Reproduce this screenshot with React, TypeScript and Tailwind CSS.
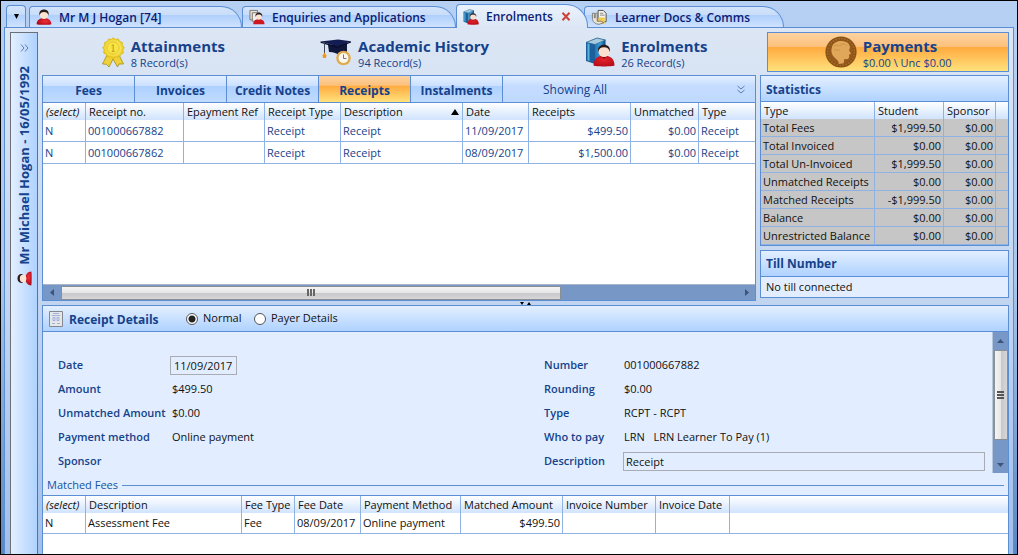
import React from "react";
import clsx from "clsx";

const PANEL = "border border-[#5c8ed6]";
const HEAD_BG = "bg-linear-to-b from-[#e3efff] to-[#afd2ff]";
const GLASS = "bg-linear-to-b from-[#e3efff] from-0% via-[#c4dcff] via-40% to-[#bfdaff] to-100%";
const ORANGE = "bg-[linear-gradient(#fdd3a0,#fcc07c_36%,#ffab3f_38%,#ffe17c)]";
const THEAD = "bg-linear-to-b from-white to-[#d0e3fd]";

function Person({ size = 16 }: { size?: number }) {
  return (
    <svg width={size} height={size} viewBox="0 0 16 16" aria-hidden="true">
      <defs>
        <radialGradient id="redBody" cx="0.6" cy="0.5" r="0.6">
          <stop offset="0" stopColor="#f0303a" />
          <stop offset="1" stopColor="#b00a18" />
        </radialGradient>
      </defs>
      <path d="M.6 15.200C.6 11.500 3.500 9 8 9s7.400 2.500 7.400 6.200c-1 .7-13.800.7-14.800 0z" fill="url(#redBody)" />
      <circle cx="8" cy="5.800" r="4.200" fill="#fbe3d3" />
      <path d="M3.500 6.500C2.600 2.500 5 .5 8 .5s5.400 2 4.500 6C11.500 3.800 10.500 3 8 3S4.500 3.800 3.500 6.500z" fill="#2a1c1c" />
    </svg>
  );
}

function PersonDoc() {
  return (
    <svg width="16" height="16" viewBox="0 0 17 16" aria-hidden="true">
      <path d="M1 1h8v10H1z" fill="#e8e4dc" stroke="#77736c" />
      <path d="M3.500 3.500h8v9h-8z" fill="#f2efe8" stroke="#77736c" />
      <path d="M4.500 15.600c0-3.600 2.300-5.200 6-5.200s6 1.600 6 5.200z" fill="#cf1722" />
      <circle cx="10.500" cy="7.600" r="3.200" fill="#fbe3d3" />
      <path d="M7 8C6.300 5 8.300 3.600 10.500 3.600S14.700 5 14 8C13.300 6 12.500 5.400 10.500 5.400S7.600 6 7 8z" fill="#2a1c1c" />
    </svg>
  );
}

function BookPerson({ size }: { size: number }) {
  return (
    <svg width={size} height={size} viewBox="0 0 30 30" aria-hidden="true">
      <defs>
        <linearGradient id="book" x1="0" x2="1">
          <stop offset="0" stopColor="#2277b4" />
          <stop offset="0.5" stopColor="#3b9bd0" />
          <stop offset="1" stopColor="#0e4a86" />
        </linearGradient>
        <radialGradient id="redCoat" cx="0.5" cy="0.4" r="0.6">
          <stop offset="0" stopColor="#e5222c" />
          <stop offset="1" stopColor="#b80e1a" />
        </radialGradient>
      </defs>
      <path d="M1 5.500L12 1l8.500 2L10 7.500z" fill="#a9cbdc" stroke="#1f5f92" strokeWidth=".8" />
      <path d="M1 5.500l9 2V27l-9-3z" fill="#1b5f9c" />
      <path d="M2.500 6.500l2 .5v17l-2-.7z" fill="#58b4dd" />
      <path d="M10 7.500L20.500 3v20L10 27z" fill="url(#book)" />
      <path d="M8.500 28.500c0-6.500 4-10 10.500-10s10.500 3.500 10.500 10c-2 1.200-19 1.200-21 0z" fill="url(#redCoat)" />
      <path d="M15.500 19l3.500 3 3.500-3z" fill="#8f0c16" />
      <circle cx="19" cy="14.500" r="5.500" fill="#fbe0cf" />
      <path d="M13.200 15c-.8-5 2-7.200 5.800-7.200s6.600 2.200 5.800 7.200c-.9-3.400-2.600-4.700-5.800-4.700s-4.900 1.300-5.800 4.700z" fill="#2a1a1a" />
    </svg>
  );
}

function Rosette() {
  return (
    <svg width="24" height="30" viewBox="0 0 24 30" aria-hidden="true">
      <defs>
        <radialGradient id="gold">
          <stop offset="0.5" stopColor="#fdf272" />
          <stop offset="1" stopColor="#e9c50f" />
        </radialGradient>
      </defs>
      <path d="M6 18L1.500 27l4 .3L8 30l4-8 4.500 8 1.500-3 4.500 0L18 18z" fill="#efd238" stroke="#a58a16" strokeWidth=".8" />
      <path
        d="M12 .8l2.400 1.600 2.900-.5 1.300 2.500 2.700 1 0 2.900 1.900 2.200-1.300 2.600.5 2.900-2.600 1.300-1.300 2.600-2.900-.2L12 21.300l-2.600-1.600-2.900.2-1.300-2.600-2.600-1.300.5-2.900L1.800 10.500l1.900-2.200 0-2.900 2.700-1 1.300-2.500 2.900.5z"
        fill="url(#gold)" stroke="#dcb81c" strokeWidth=".8"
      />
      <circle cx="12" cy="11" r="6.200" fill="#f8e545" stroke="#e3c32a" />
      <path d="M10.600 8.800L12.200 7.700v6.600M10.700 14.300h3" fill="none" stroke="#c29c14" />
    </svg>
  );
}

function GradCap() {
  return (
    <svg width="32" height="30" viewBox="0 0 32 30" aria-hidden="true">
      <path d="M8 8l1 7c5 0 9 2 12 4l6-3V6z" fill="#10173c" />
      <path d="M.5 4.500L18 2.500l13 1.700L17.500 9.500z" fill="#141d52" />
      <path d="M.5 4.500L17.500 9.500 31 4.200v1.400l-13.500 5.300L.5 5.800z" fill="#0a0e2b" />
      <path d="M4.500 5.500V18" stroke="#3f4356" strokeWidth="1" />
      <path d="M4.500 15.500l2 3-.5 2.500H3l-.5-2.500z" fill="#ee9a1c" />
      <circle cx="23.500" cy="21" r="7.300" fill="#e3ac4b" />
      <circle cx="23.500" cy="21" r="5.400" fill="#fbf7ee" stroke="#c9973c" strokeWidth=".6" />
      <path d="M23.500 17.500v4h3" fill="none" stroke="#777" />
    </svg>
  );
}

function Coin() {
  return (
    <svg width="32" height="32" viewBox="0 0 32 32" aria-hidden="true">
      <circle cx="16" cy="16" r="15.600" fill="#8b5316" />
      <circle cx="16" cy="16" r="13.400" fill="none" stroke="#a8702c" strokeWidth="1.500" strokeDasharray="1.500 1.500" />
      <circle cx="16" cy="16" r="12" fill="#96591b" />
      <path d="M7 11c1-4 5-6.500 10-6 5 .3 8 3 8 7l-1 2 2 4-2 .6.200 2.400-1 2-4 .2-.5 4-5 .8c.4-3-1.700-4-3.700-6C6.500 19 5.800 15 7 11z" fill="#e0a659" />
      <path d="M9 10c3-2 5 1 7-1s4-1 6 1M9 14c2-1 4 1 6 0" fill="none" stroke="#d0944a" />
    </svg>
  );
}

function DocsIcon() {
  return (
    <svg width="17" height="17" viewBox="0 0 18 17" aria-hidden="true">
      <path d="M7.500 1h5.500l3 3v9H7.500z" fill="#f4f1ea" stroke="#4a4a4a" />
      <path d="M9.500 4h3.500M9.500 6h5" stroke="#888" />
      <path d="M8 8.500h6.500V15H7z" fill="#f0c84a" />
      <path d="M1.500 4v6.500c1 3.500 3.500 5 7 5.200l5-1.700-3-1.500-4 0V4l-2 0v5H3.500V4z" fill="#ece7dc" stroke="#6a665e" strokeWidth=".8" />
    </svg>
  );
}

function ReceiptIcon() {
  return (
    <svg width="14" height="16" viewBox="0 0 14 16" aria-hidden="true">
      <path d="M.5.5h13v15H.5z" fill="#e4e6ea" stroke="#85898f" />
      <path d="M4 2.500h6M3 4.500h8" stroke="#a3b4da" />
      <path d="M4 6.500h2v3H4zM8 6.500h2v3H8z" fill="none" stroke="#9db0dc" />
      <path d="M3 12.500h3M8 12.500h3" stroke="#aab4ce" />
    </svg>
  );
}

function Tri({ dir, w = 7, h = 4, fill = "#3f5277" }: { dir: "up" | "down" | "left" | "right"; w?: number; h?: number; fill?: string }) {
  const pts = {
    up: `0,${h} ${w},${h} ${w / 2},0`,
    down: `0,0 ${w},0 ${w / 2},${h}`,
    left: `${w},0 ${w},${h} 0,${h / 2}`,
    right: `0,0 0,${h} ${w},${h / 2}`,
  }[dir];
  return (
    <svg width={w} height={h} viewBox={`0 0 ${w} ${h}`} aria-hidden="true">
      <polygon points={pts} fill={fill} />
    </svg>
  );
}

function DocTab({ icon, label, className }: { icon: React.ReactNode; label: string; className: string }) {
  return (
    <button
      className={clsx(
        "flex h-[21px] shrink items-center rounded-tl-[4px] rounded-tr-[22px] border border-b-0 border-[#5c8ed6] bg-[linear-gradient(#d3e4fb,#c9ddf9_40%,#afd0fd_42%,#cfe2fe)] pl-[6px] whitespace-nowrap",
        className,
      )}
    >
      {icon}
      <span className="ml-[7px] pt-px">{label}</span>
    </button>
  );
}

function Summary({ icon, title, sub, className }: { icon: React.ReactNode; title: string; sub: string; className?: string }) {
  return (
    <button className={clsx("flex items-center justify-center gap-[6px] text-left whitespace-nowrap text-[#15428b]", className)}>
      {icon}
      <span className="flex flex-col pt-1">
        <span className="text-[15px] leading-[18px] font-bold">{title}</span>
        <span className="leading-4">{sub}</span>
      </span>
    </button>
  );
}

function SubTab({ label, active }: { label: string; active?: boolean }) {
  return (
    <button
      className={clsx(
        "w-[92px] border-r border-[#5c8ed6] pt-[3px] text-center text-[12px] font-bold text-[#15428b]",
        active ? ORANGE : "bg-[linear-gradient(#e3efff,#cbe0ff_38%,#afd1ff_40%,#c0dbff)]",
      )}
    >
      {label}
    </button>
  );
}

type Col = { label: React.ReactNode; w?: string; right?: boolean };

function Grid({ cols, rows, label, rowH, tone }: { cols: Col[]; rows: string[][]; label: string; rowH: string; tone: string }) {
  return (
    <table aria-label={label} className="w-full table-fixed border-separate border-spacing-0 whitespace-nowrap">
      <colgroup>
        {cols.map((c, i) => (
          <col key={i} className={c.w} />
        ))}
      </colgroup>
      <thead className={THEAD}>
        <tr className="h-[17px]">
          {cols.map((c, i) => (
            <th
              key={i}
              className={clsx(
                "p-0 pt-px pl-[3px] text-left leading-4 font-normal text-[#111]",
                i < cols.length - 1 && "border-r border-[#8db2e3]",
              )}
            >
              {c.label}
            </th>
          ))}
        </tr>
      </thead>
      <tbody className={tone}>
        {rows.map((r, i) => (
          <tr key={i} className={rowH}>
            {r.map((v, j) => (
              <td
                key={j}
                className={clsx(
                  "border-b border-[#8db2e3] p-0 leading-4",
                  j < cols.length - 1 && "border-r",
                  cols[j].right ? "pr-0.5 text-right" : "pl-0.5 text-left",
                )}
              >
                {v}
              </td>
            ))}
          </tr>
        ))}
      </tbody>
    </table>
  );
}

const select = <i>(select)</i>;

const receiptCols: Col[] = [
  { label: select, w: "w-[43px]" },
  { label: "Receipt no.", w: "w-[98px]" },
  { label: "Epayment Ref", w: "w-[81px]" },
  { label: "Receipt Type", w: "w-[76px]" },
  {
    label: (
      <span className="flex items-center justify-between pr-[3px]">
        Description <Tri dir="up" w={8} h={6} fill="#000" />
      </span>
    ),
    w: "w-[122px]",
  },
  { label: "Date", w: "w-[66px]" },
  { label: "Receipts", w: "w-[102px]", right: true },
  { label: "Unmatched", w: "w-[68px]", right: true },
  { label: "Type" },
];

const receiptRows = [
  ["N", "001000667882", "", "Receipt", "Receipt", "11/09/2017", "$499.50", "$0.00", "Receipt"],
  ["N", "001000667862", "", "Receipt", "Receipt", "08/09/2017", "$1,500.00", "$0.00", "Receipt"],
];

const statCols: Col[] = [
  { label: "Type", w: "w-[114px]" },
  { label: "Student", w: "w-[69px]", right: true },
  { label: "Sponsor", w: "w-[52px]", right: true },
  { label: "" },
];

const statRows = [
  ["Total Fees", "$1,999.50", "$0.00", ""],
  ["Total Invoiced", "$0.00", "$0.00", ""],
  ["Total Un-Invoiced", "$1,999.50", "$0.00", ""],
  ["Unmatched Receipts", "$0.00", "$0.00", ""],
  ["Matched Receipts", "-$1,999.50", "$0.00", ""],
  ["Balance", "$0.00", "$0.00", ""],
  ["Unrestricted Balance", "$0.00", "$0.00", ""],
];

const feeCols: Col[] = [
  { label: select, w: "w-[43px]" },
  { label: "Description", w: "w-[156px]" },
  { label: "Fee Type", w: "w-[53px]" },
  { label: "Fee Date", w: "w-[66px]" },
  { label: "Payment Method", w: "w-[100px]" },
  { label: "Matched Amount", w: "w-[102px]", right: true },
  { label: "Invoice Number", w: "w-[93px]" },
  { label: "Invoice Date", w: "w-[74px]" },
  { label: "" },
];

const feeRows = [["N", "Assessment Fee", "Fee", "08/09/2017", "Online payment", "$499.50", "", "", ""]];

function Field({ label, value }: { label: string; value: string }) {
  return (
    <div className="flex h-6 items-center">
      <dt className="w-[114px] font-semibold whitespace-nowrap text-[#15428b] group-data-[side=right]:w-20">{label}</dt>
      <dd className="whitespace-pre">{value}</dd>
    </div>
  );
}

const radio =
  "h-3 w-3 appearance-none rounded-full border border-[#555] bg-white checked:bg-[radial-gradient(circle,#222_3px,#fff_4px)]";

export default function App() {
  return (
    <div className="flex min-h-screen flex-col border border-black bg-linear-to-b from-[#b5d0f2] via-[#a9c7ef] to-[#5a86c2] font-['Open_Sans',sans-serif] text-[11px] text-[#111]">
      <nav className="flex h-[26px] items-end pl-[5px] text-[12px] font-semibold text-[#0c1c74]">
        <button aria-label="Tab list" className="mr-[3px] flex h-[22px] w-5 items-center justify-center rounded-t-[4px] border border-b-0 border-[#5c8ed6] bg-[linear-gradient(#d3e4fb,#c9ddf9_40%,#afd0fd_42%,#cfe2fe)]">
          <Tri dir="down" w={5} h={5} fill="#000" />
        </button>
        <DocTab className="w-[213px]" icon={<Person size={16} />} label="Mr M J Hogan [74]" />
        <DocTab className="w-[214px]" icon={<PersonDoc />} label="Enquiries and Applications" />
        <div className="relative z-10 -mb-px flex h-[24px] w-[132px] items-center rounded-tl-[4px] rounded-tr-[22px] border border-b-0 border-[#5c8ed6] bg-linear-to-b from-[#eaf2fd] to-[#dbe6f4] pl-[6px]">
          <BookPerson size={16} />
          <button className="ml-[7px] pt-px">Enrolments</button>
          <button aria-label="Close tab" className="ml-2">
            <svg width="10" height="9" viewBox="0 0 10 9" aria-hidden="true">
              <path d="M1.500 .8l7 7.400M8.500 .8l-7 7.400" stroke="#cc4238" strokeWidth="2" />
            </svg>
          </button>
        </div>
        <DocTab className="-ml-1 w-[200px]" icon={<DocsIcon />} label="Learner Docs & Comms" />
      </nav>

      <div className="mr-[3px] ml-[3px] flex flex-1 gap-1 border border-b-0 border-[#5c8ed6] bg-linear-to-b from-[#dce6f4] via-[#c3d6f0] to-[#a1c0ea] pt-1 pr-1 pl-[5px]">
        <aside className="flex w-7 shrink-0 flex-col items-center border border-b-0 border-[#6b6f78] bg-linear-to-r from-[#e3efff] to-[#afd2ff] text-[#15428b]">
          <button aria-label="Expand" className="mt-[11px] mb-[14px]">
            <svg width="9" height="8" viewBox="0 0 9 8" fill="none" stroke="#5c7cb0" aria-hidden="true">
              <path d="M1 .5L4 4 1 7.500M5 .5L8 4 5 7.500" />
            </svg>
          </button>
          <span className="rotate-180 text-[13px] leading-4 font-bold whitespace-nowrap [writing-mode:vertical-rl]">
            Mr Michael Hogan - 16/05/1992
          </span>
          <span className="mt-1.5 -rotate-90">
            <Person size={15} />
          </span>
        </aside>

        <main className="flex min-w-0 flex-1 flex-col">
          <div className="grid h-10 grid-cols-4">
            <Summary icon={<Rosette />} title="Attainments" sub="8 Record(s)" />
            <Summary icon={<GradCap />} title="Academic History" sub="94 Record(s)" />
            <Summary icon={<BookPerson size={30} />} title="Enrolments" sub="26 Record(s)" />
            <Summary className={clsx(PANEL, ORANGE)} icon={<Coin />} title="Payments" sub="$0.00 \ Unc $0.00" />
          </div>

          <div className="mt-[3px] flex gap-1">
            <section className={clsx("flex min-w-0 flex-1 flex-col bg-white", PANEL)}>
              <div className={clsx("flex h-[27px] border-b border-[#5c8ed6]", GLASS)}>
                <SubTab label="Fees" />
                <SubTab label="Invoices" />
                <SubTab label="Credit Notes" />
                <SubTab label="Receipts" active />
                <SubTab label="Instalments" />
                <div className="flex flex-1 items-center justify-between pt-px pr-[10px] pl-10 text-[12px] text-[#15428b]">
                  Showing All
                  <button aria-label="Collapse">
                    <svg width="8" height="9" viewBox="0 0 8 9" fill="none" stroke="#5c7cb0" aria-hidden="true">
                      <path d="M.5 1L4 4 7.500 1M.5 5L4 8 7.500 5" />
                    </svg>
                  </button>
                </div>
              </div>
              <div className="flex-1">
                <Grid label="Receipts" cols={receiptCols} rows={receiptRows} rowH="h-[22px]" tone="text-[#15428b]" />
              </div>
              <div className="flex h-4 items-center border-t border-[#a9b6c9] bg-[#7798c6]">
                <button aria-label="Scroll left" className="flex w-[18px] justify-center">
                  <Tri dir="left" w={4} h={7} />
                </button>
                <div className="flex h-[14px] w-[500px] items-center justify-center gap-px rounded-[1px] border border-[#8a8f96] bg-[linear-gradient(#f4f4f4,#e6e6e6_50%,#c9c9cb_52%,#d6d6d8)]">
                  <i className="h-[7px] w-0.5 bg-[#666]" />
                  <i className="h-[7px] w-0.5 bg-[#666]" />
                  <i className="h-[7px] w-0.5 bg-[#666]" />
                </div>
                <button aria-label="Scroll right" className="mr-[6px] ml-auto">
                  <Tri dir="right" w={4} h={7} />
                </button>
              </div>
            </section>

            <div className="flex w-[249px] shrink-0 flex-col gap-1 pb-[3px]">
              <section className={PANEL}>
                <h2 className={clsx("flex h-[26px] items-center border-b border-[#5c8ed6] pt-0.5 pl-[5px] text-[12px] font-bold text-[#15428b]", HEAD_BG)}>
                  Statistics
                </h2>
                <Grid label="Statistics" cols={statCols} rows={statRows} rowH="h-[18px]" tone="bg-[#c6c6c6]" />
              </section>
              <section className={PANEL}>
                <h2 className={clsx("flex h-[26px] items-center border-b border-[#5c8ed6] pl-[5px] text-[12px] font-bold text-[#15428b]", HEAD_BG)}>
                  Till Number
                </h2>
                <p className="flex h-5 items-center bg-[#e2eeff] pl-[5px]">No till connected</p>
              </section>
            </div>
          </div>

          <div className="flex h-1 items-center justify-center gap-[3px]">
            <Tri dir="down" w={4} h={3} fill="#000" />
            <Tri dir="up" w={4} h={3} fill="#000" />
          </div>

          <section className={clsx("flex flex-1 flex-col border-b-0! bg-[#e2eeff]", PANEL)}>
            <div className={clsx("flex h-[26px] items-center border-b border-[#5c8ed6] pl-[6px]", HEAD_BG)}>
              <ReceiptIcon />
              <h2 className="ml-[6px] w-[117px] pt-0.5 text-[12px] font-bold text-[#15428b]">Receipt Details</h2>
              <label className="flex w-[68px] items-center gap-[5px]">
                <input type="radio" name="view" defaultChecked className={radio} />
                Normal
              </label>
              <label className="flex items-center gap-[5px]">
                <input type="radio" name="view" className={radio} />
                Payer Details
              </label>
            </div>

            <div className="flex h-[141px]">
              <div className="grid min-w-0 flex-1 grid-cols-[52%_1fr] gap-x-1 pt-[21px] pr-[7px] pl-[15px]">
                <dl className="group" data-side="left">
                  <div className="flex h-6 items-center">
                    <dt className="w-28 font-semibold text-[#15428b]">
                      <label htmlFor="date">Date</label>
                    </dt>
                    <dd>
                      <input id="date" defaultValue="11/09/2017" className="block h-[19px] w-[67px] border border-[#a9adb3] bg-transparent pl-[3px]" />
                    </dd>
                  </div>
                  <Field label="Amount" value="$499.50" />
                  <Field label="Unmatched Amount" value="$0.00" />
                  <Field label="Payment method" value="Online payment" />
                  <Field label="Sponsor" value="" />
                </dl>
                <dl className="group" data-side="right">
                  <Field label="Number" value="001000667882" />
                  <Field label="Rounding" value="$0.00" />
                  <Field label="Type" value="RCPT - RCPT" />
                  <Field label="Who to pay" value="LRN   LRN Learner To Pay (1)" />
                  <div className="flex h-6 items-center">
                    <dt className="w-[79px] font-semibold text-[#15428b]">
                      <label htmlFor="desc">Description</label>
                    </dt>
                    <dd className="flex-1">
                      <input id="desc" defaultValue="Receipt" className="block h-[19px] w-full border border-[#a9adb3] bg-transparent pl-0.5" />
                    </dd>
                  </div>
                </dl>
              </div>
              <div className="flex w-4 flex-col items-center border-l border-[#b5c6de] bg-[#7798c6]">
                <button aria-label="Scroll up" className="flex h-[18px] items-center">
                  <Tri dir="up" />
                </button>
                <div className="flex h-[90px] w-[14px] flex-col items-center justify-center gap-px rounded-[1px] border border-[#8a8f96] bg-[linear-gradient(90deg,#f4f4f4,#e6e6e6_50%,#c9c9cb_52%,#d6d6d8)]">
                  <i className="h-0.5 w-[7px] bg-[#555]" />
                  <i className="h-0.5 w-[7px] bg-[#555]" />
                  <i className="h-0.5 w-[7px] bg-[#555]" />
                </div>
                <button aria-label="Scroll down" className="mt-auto flex h-4 items-center">
                  <Tri dir="down" />
                </button>
              </div>
            </div>

            <div className="flex h-[23px] items-center gap-1 border-b border-[#5c8ed6] pt-0.5 pr-1 pl-1 text-[#15529f]">
              <h3>Matched Fees</h3>
              <hr className="flex-1 border-[#5c8ed6]" />
            </div>
            <div className="flex-1 bg-white">
              <Grid label="Matched fees" cols={feeCols} rows={feeRows} rowH="h-[21px]" tone="" />
            </div>
          </section>
        </main>
      </div>
    </div>
  );
}
